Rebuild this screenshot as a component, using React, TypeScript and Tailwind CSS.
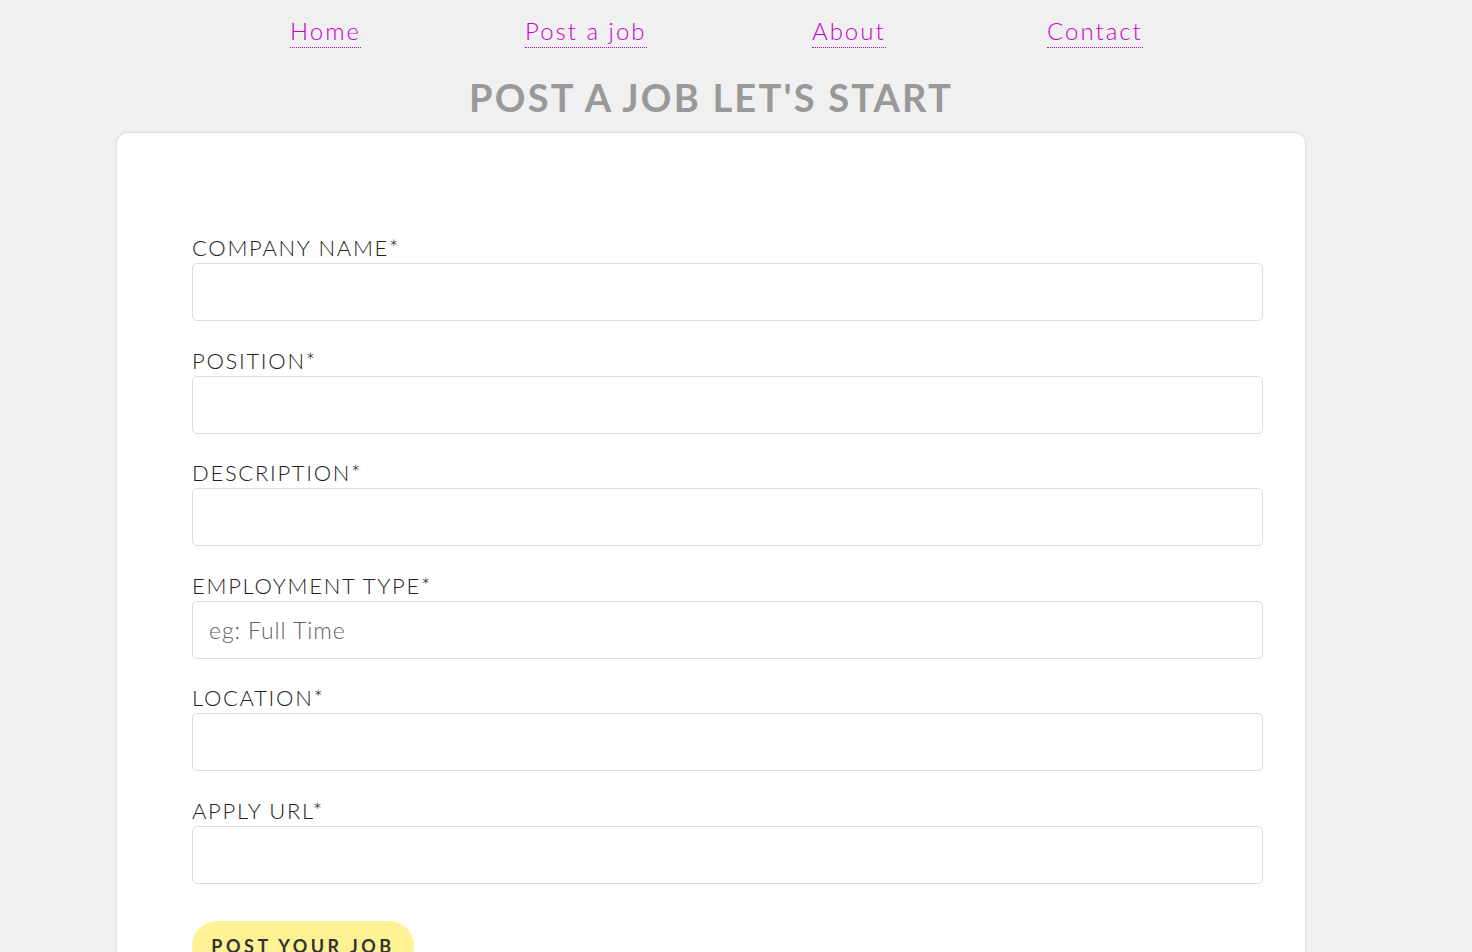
import React from 'react'

const fields = [
  { label: 'COMPANY NAME*', placeholder: '' },
  { label: 'POSITION*', placeholder: '' },
  { label: 'DESCRIPTION*', placeholder: '' },
  { label: 'EMPLOYMENT TYPE*', placeholder: 'eg: Full Time' },
  { label: 'LOCATION*', placeholder: '' },
  { label: 'APPLY URL*', placeholder: '' },
]

const links = [
  { name: 'Home', w: 'w-[235px]' },
  { name: 'Post a job', w: 'w-[287px]' },
  { name: 'About', w: 'w-[235px]' },
  { name: 'Contact', w: 'w-[96px]' },
]

export default function App() {
  return (
    <div className="min-h-screen bg-[#f0f0f0] font-['Lato','Noto_Sans',sans-serif] overflow-hidden h-[952px]">
      <nav className="flex pl-[290px] pt-[17px] h-[64px]">
        {links.map((l) => (
          <div key={l.name} className={l.w}>
            <a
              href="#"
              className="inline-block text-[24px] leading-[28px] tracking-[2px] font-light text-[#cc00cc] border-b border-dotted border-[#cc00cc] h-[31px]"
            >
              {l.name}
            </a>
          </div>
        ))}
      </nav>
      <h1 className="w-[1422px] text-center text-[38px] leading-[66px] font-bold tracking-[2.2px] text-[#999999]">
        POST A JOB LET&apos;S START
      </h1>
      <div className="ml-[116px] mt-[2px] w-[1190px] bg-white rounded-[12px] border border-[#e2e2e2] shadow-[0_0_2px_rgba(0,0,0,0.08)] pl-[75px] pr-[43px] pt-[99px] pb-10">
        <form className="flex flex-col gap-[23.5px]" onSubmit={(e) => e.preventDefault()}>
          {fields.map((f) => (
            <div key={f.label} className="flex flex-col">
              <label className="text-[22px] leading-[31px] tracking-[1.7px] font-light text-[#222]">{f.label}</label>
              <input
                placeholder={f.placeholder}
                className="w-[1071px] h-[58px] border border-[#dcdcdc] rounded-[5px] px-[16px] text-[23px] tracking-[0.9px] font-light text-[#333] placeholder:text-[#5f5f5f] outline-none"
              />
            </div>
          ))}
          <button
            type="submit"
            className="self-start mt-[14px] w-[222px] h-[50px] rounded-full bg-[#fff294] text-[#333] font-bold text-[18px] tracking-[3.5px]"
          >
            POST YOUR JOB
          </button>
        </form>
      </div>
    </div>
  )
}
